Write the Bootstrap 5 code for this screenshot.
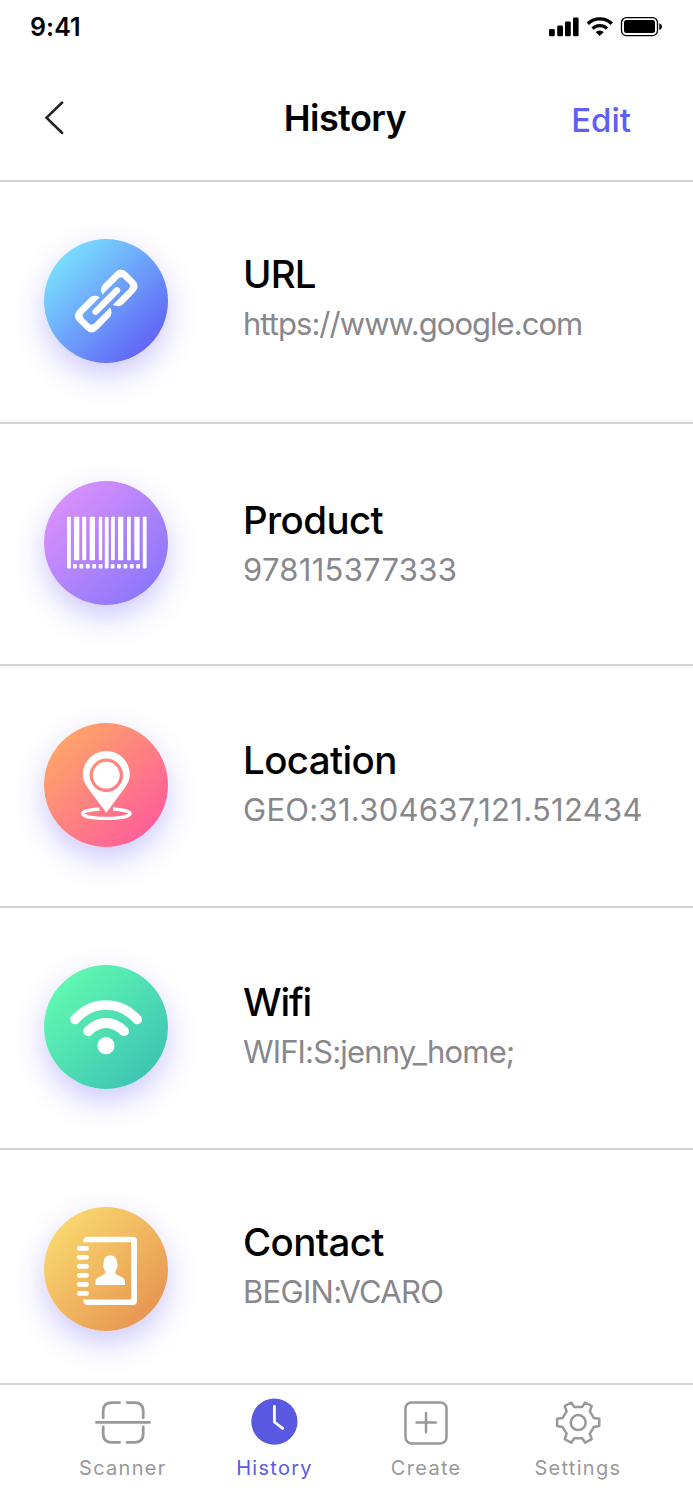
<!DOCTYPE html>
<html lang="en">
<head>
<meta charset="utf-8">
<meta name="viewport" content="width=device-width, initial-scale=1">
<title>History</title>
<link href="https://cdn.jsdelivr.net/npm/bootstrap@5.3.0/dist/css/bootstrap.min.css" rel="stylesheet">
<style>
body{font-family:Inter,"Liberation Sans",sans-serif;background:#fff;color:#000}
.screen{height:1500px;overflow:hidden}
.status{height:52px;padding:1px 30px 0 30px}
.clock{font-size:25px;font-weight:600;line-height:30px;letter-spacing:.1px}
.topbar{height:129.5px;padding:4px 62px 0 44px;border-bottom:2px solid #d4d4d6}
.topbar h1{font-size:36px;font-weight:600;line-height:44px;letter-spacing:-.55px;padding-left:15px}
.side{width:90px}
.edit{display:block;padding-top:5px;font-size:33px;font-weight:500;line-height:40px;color:#5f5ff8;text-decoration:none}
.entries{height:1201.5px;overflow:hidden}
.entry{height:242px;flex:none;border-bottom:2px solid #d4d4d6;padding:0 0 2px 44px}
.entry-text{margin-bottom:5px}
.entry-text.raised{margin-bottom:7.5px}
.disc{width:124px;height:124px;border-radius:50%;flex:none;margin-right:75px;box-shadow:0 12px 30px rgba(88,76,248,.3)}
.disc svg{display:block}
.g-url{background:linear-gradient(135deg,#7be8ff 8%,#5f5af6 92%)}
.g-product{background:linear-gradient(135deg,#de92fb 8%,#8775fb 92%)}
.g-location{background:linear-gradient(135deg,#ffa767 10%,#fe5b9b 90%)}
.g-wifi{background:linear-gradient(135deg,#62fbb1 10%,#3bc1b4 92%)}
.g-contact{background:linear-gradient(135deg,#fadc70 8%,#e6914f 92%)}
.name{font-size:38.5px;font-weight:500;line-height:48px;margin:0;letter-spacing:-.62px}
.n-url{letter-spacing:-.8px}
.n-wifi{letter-spacing:-1.2px}
.detail{font-size:31px;line-height:38px;margin-top:7px;color:#87878c;white-space:nowrap}
.d-url{letter-spacing:-.96px}
.d-product,.d-location{letter-spacing:.28px}
.d-wifi{letter-spacing:-.85px}
.d-contact{letter-spacing:-.72px}
.tabs{height:117px;border-top:2px solid #d4d4d6;padding:12px 39px 0 47px}
.tab-item{width:151.7px;color:#999;text-decoration:none;font-size:20px;letter-spacing:1.3px;line-height:26px}
.tab-item svg{display:block;margin-bottom:8px}
.tab-item.active{color:#5a5aec}
</style>
</head>
<body>
<div class="screen d-flex flex-column">
  <div class="status d-flex justify-content-between align-items-center">
    <span class="clock">9:41</span>
    <svg width="114" height="22" viewBox="549 16 114 22">
      <g><rect x="549" y="29" width="5.8" height="7.3" rx="1.4"/><rect x="557.2" y="25.6" width="5.8" height="10.7" rx="1.4"/><rect x="565" y="21.5" width="5.8" height="14.8" rx="1.4"/><rect x="573" y="17.6" width="5.6" height="18.7" rx="1.4"/></g>
      <g fill="none" stroke="#000" stroke-width="3.4"><path d="M587.8 23.8a17 17 0 0 1 24 0"/><path d="M592.6 28.6a10.3 10.3 0 0 1 14.4 0"/></g>
      <path d="M595.6 32a6 6 0 0 1 8.2 0l-4.1 4z"/>
      <rect x="621.5" y="17.6" width="36" height="18" rx="5" fill="none" stroke="#000" stroke-width="1.3"/><rect x="624" y="20.1" width="31" height="13" rx="2.4"/><path d="M659.3 23.2c3.6 1.4 3.6 5.4 0 6.8z"/>
    </svg>
  </div>
  <header class="topbar d-flex align-items-center justify-content-between">
    <div class="side"><svg class="d-block" width="24" height="36" viewBox="0 0 24 36" fill="none" stroke="#222" stroke-width="2.5" stroke-linecap="round"><path d="M18.2 2.5L2.5 17.7L18.2 33"/></svg></div>
    <h1 class="m-0">History</h1>
    <div class="side text-end"><a class="edit" href="#">Edit</a></div>
  </header>
  <main class="entries d-flex flex-column">
    <div class="entry d-flex align-items-center">
      <div class="disc g-url"><svg width="124" height="124" viewBox="0 0 124 124"><defs><path id="half-link" d="M2 -7.6C3.2 -11.7 6 -14.4 10.2 -14.4H27Q35.8 -14.4 35.8 -5.6V5.6Q35.8 14.4 27 14.4H10.2C6 14.4 3.2 11.7 2 7.6H25Q29 7.6 29 3.6V-3.6Q29 -7.6 25 -7.6Z"/></defs><g transform="translate(62.3 62) rotate(-45) scale(.97)" fill="#fff"><path stroke="#fff" stroke-width="6.6" stroke-linecap="round" d="M-15.6 0H15.6"/><use href="#half-link"/><use href="#half-link" transform="rotate(180)"/></g></svg></div>
      <div class="entry-text raised"><h2 class="name n-url">URL</h2><div class="detail d-url">https://www.google.com</div></div>
    </div>
    <div class="entry d-flex align-items-center">
      <div class="disc g-product"><svg width="124" height="124" viewBox="0 0 124 124" fill="#fff"><rect x="23" y="35.7" width="3.8" height="51.7" rx=".8"/><rect x="60.8" y="35.7" width="3.8" height="51.7" rx=".8"/><rect x="98.8" y="35.7" width="3.8" height="51.7" rx=".8"/><rect x="30" y="35.7" width="5.3" height="43.6" rx=".8"/><rect x="38.2" y="35.7" width="4" height="43.6" rx=".8"/><rect x="45.7" y="35.7" width="5.3" height="43.6" rx=".8"/><rect x="54.8" y="35.7" width="3.4" height="43.6" rx=".8"/><rect x="67" y="35.7" width="3.8" height="43.6" rx=".8"/><rect x="74" y="35.7" width="5.3" height="43.6" rx=".8"/><rect x="83" y="35.7" width="3.8" height="43.6" rx=".8"/><rect x="90.3" y="35.7" width="5.3" height="43.6" rx=".8"/><rect x="29" y="83" width="3.9" height="4.4" rx="1"/><rect x="35.4" y="83" width="3.9" height="4.4" rx="1"/><rect x="41.8" y="83" width="3.9" height="4.4" rx="1"/><rect x="48.2" y="83" width="3.9" height="4.4" rx="1"/><rect x="54.6" y="83" width="3.9" height="4.4" rx="1"/><rect x="66.6" y="83" width="3.9" height="4.4" rx="1"/><rect x="73" y="83" width="3.9" height="4.4" rx="1"/><rect x="79.4" y="83" width="3.9" height="4.4" rx="1"/><rect x="85.8" y="83" width="3.9" height="4.4" rx="1"/><rect x="92.2" y="83" width="3.9" height="4.4" rx="1"/></svg></div>
      <div class="entry-text pt-1"><h2 class="name n-product">Product</h2><div class="detail d-product">978115377333</div></div>
    </div>
    <div class="entry d-flex align-items-center">
      <div class="disc g-location"><svg width="124" height="124" viewBox="0 0 124 124"><path fill="none" stroke="#fff" stroke-width="3.4" d="M55.5 86C44 86.8 38.6 88.4 38.6 90.6C38.6 93.4 49 95.4 62.3 95.4S86 93.4 86 90.6C86 88.4 80.5 86.8 69 86"/><path fill="#fff" fill-rule="evenodd" d="M62.3 89.8L44.3 65.5C40.7 60.4 38.8 56.5 38.8 51.5A23.5 23.5 0 0 1 85.8 51.5C85.8 56.5 83.9 60.4 80.3 65.5ZM62.3 35.5a16.7 16.7 0 1 0 0 33.4a16.7 16.7 0 1 0 0-33.4z"/><circle cx="62.3" cy="52.2" r="13.4" fill="#fff"/></svg></div>
      <div class="entry-text"><h2 class="name n-location">Location</h2><div class="detail d-location">GEO:31.304637,121.512434</div></div>
    </div>
    <div class="entry d-flex align-items-center">
      <div class="disc g-wifi"><svg width="124" height="124" viewBox="0 0 124 124" fill="none" stroke="#fff" stroke-linecap="round"><path stroke-width="9.6" d="M31 54.5Q44 40 62 40T93.2 54.5"/><path stroke-width="10" d="M44.2 66.2Q52 58 62 58T80 66.2"/><circle cx="62" cy="80.7" r="8.6" fill="#fff" stroke="none"/></svg></div>
      <div class="entry-text"><h2 class="name n-wifi">Wifi</h2><div class="detail d-wifi">WIFI:S:jenny_home;</div></div>
    </div>
    <div class="entry d-flex align-items-center">
      <div class="disc g-contact"><svg width="124" height="124" viewBox="0 0 124 124"><path fill="#fff" d="M39 35.2Q39.5 29.7 44 29.7H89Q93 29.7 93 33.7V94Q93 98 89 98H44Q39.5 98 39 92.4H87.2V35.2Z"/><g stroke="#fff" stroke-width="4.6" stroke-linecap="round"><path d="M35.2 41.4H42.6M35.2 50.4H42.6M35.2 59.4H42.6M35.2 68.4H42.6M35.2 77.4H42.6M35.2 86.4H42.6"/></g><path fill="#fff" d="M66.3 48.4C70.6 48.4 72.9 51 72.9 54.5C72.9 56 73.5 57.5 73.5 58.8C73.5 61.4 71.8 62.6 71 65.8C73.5 69.3 81 70.4 81 73.4V77.9H51.5V73.4C51.5 70.4 59 69.3 61.5 65.8C60.8 62.6 59.2 61.4 59.2 58.8C59.2 57.5 59.8 56 59.8 54.5C59.8 51 62 48.4 66.3 48.4Z"/></svg></div>
      <div class="entry-text raised"><h2 class="name n-contact">Contact</h2><div class="detail d-contact">BEGIN:VCARO</div></div>
    </div>
  </main>
  <nav class="tabs d-flex">
    <a href="#" class="tab-item d-flex flex-column align-items-center"><svg width="56" height="50" viewBox="0 0 56 50" fill="none" stroke="#999" stroke-width="2.8" stroke-linecap="round"><path d="M1.5 25.4H54.5M8.2 20.8V14Q8.2 5.6 16.6 5.6H24.6M32.1 5.6H39.6Q48.2 5.6 48.2 14V20.8M8.2 29.9V37Q8.2 45.4 16.6 45.4H24.6M32.1 45.4H39.6Q48.2 45.4 48.2 37V29.9"/></svg><span>Scanner</span></a>
    <a href="#" class="tab-item active d-flex flex-column align-items-center"><svg width="50" height="50" viewBox="0 0 50 50"><circle cx="24.4" cy="24.7" r="23.1" fill="#5858e0"/><path d="M24.4 9.5V25L32.7 31.4" fill="none" stroke="#fff" stroke-width="2.8" stroke-linecap="round" stroke-linejoin="round"/></svg><span>History</span></a>
    <a href="#" class="tab-item d-flex flex-column align-items-center"><svg width="50" height="50" viewBox="0 0 50 50" fill="none" stroke="#999" stroke-width="2.5" stroke-linecap="round"><rect x="4.5" y="5.4" width="41" height="41" rx="6"/><path d="M15.5 25.6H34.8M25 16V35.2"/></svg><span>Create</span></a>
    <a href="#" class="tab-item d-flex flex-column align-items-center"><svg width="50" height="50" viewBox="0 0 50 50" fill="none" stroke="#999" stroke-width="2.5" stroke-linejoin="round"><circle cx="25.2" cy="25.6" r="7.5"/><path d="M21.2 9.9H29.2L32.2 5.5L38.7 9L36.8 14.3L40.8 20.9L46.3 21.7V29L40.8 30.1L36.8 36.7L38.7 42.2L32.2 45.7L29.2 41.3H21.2L18.2 45.7L11.7 42.2L13.6 36.7L9.6 30.1L4.1 29V21.7L9.6 20.9L13.6 14.3L11.7 9L18.2 5.5Z"/></svg><span>Settings</span></a>
  </nav>
</div>
<script src="https://cdn.jsdelivr.net/npm/bootstrap@5.3.0/dist/js/bootstrap.bundle.min.js"></script>
</body>
</html>
